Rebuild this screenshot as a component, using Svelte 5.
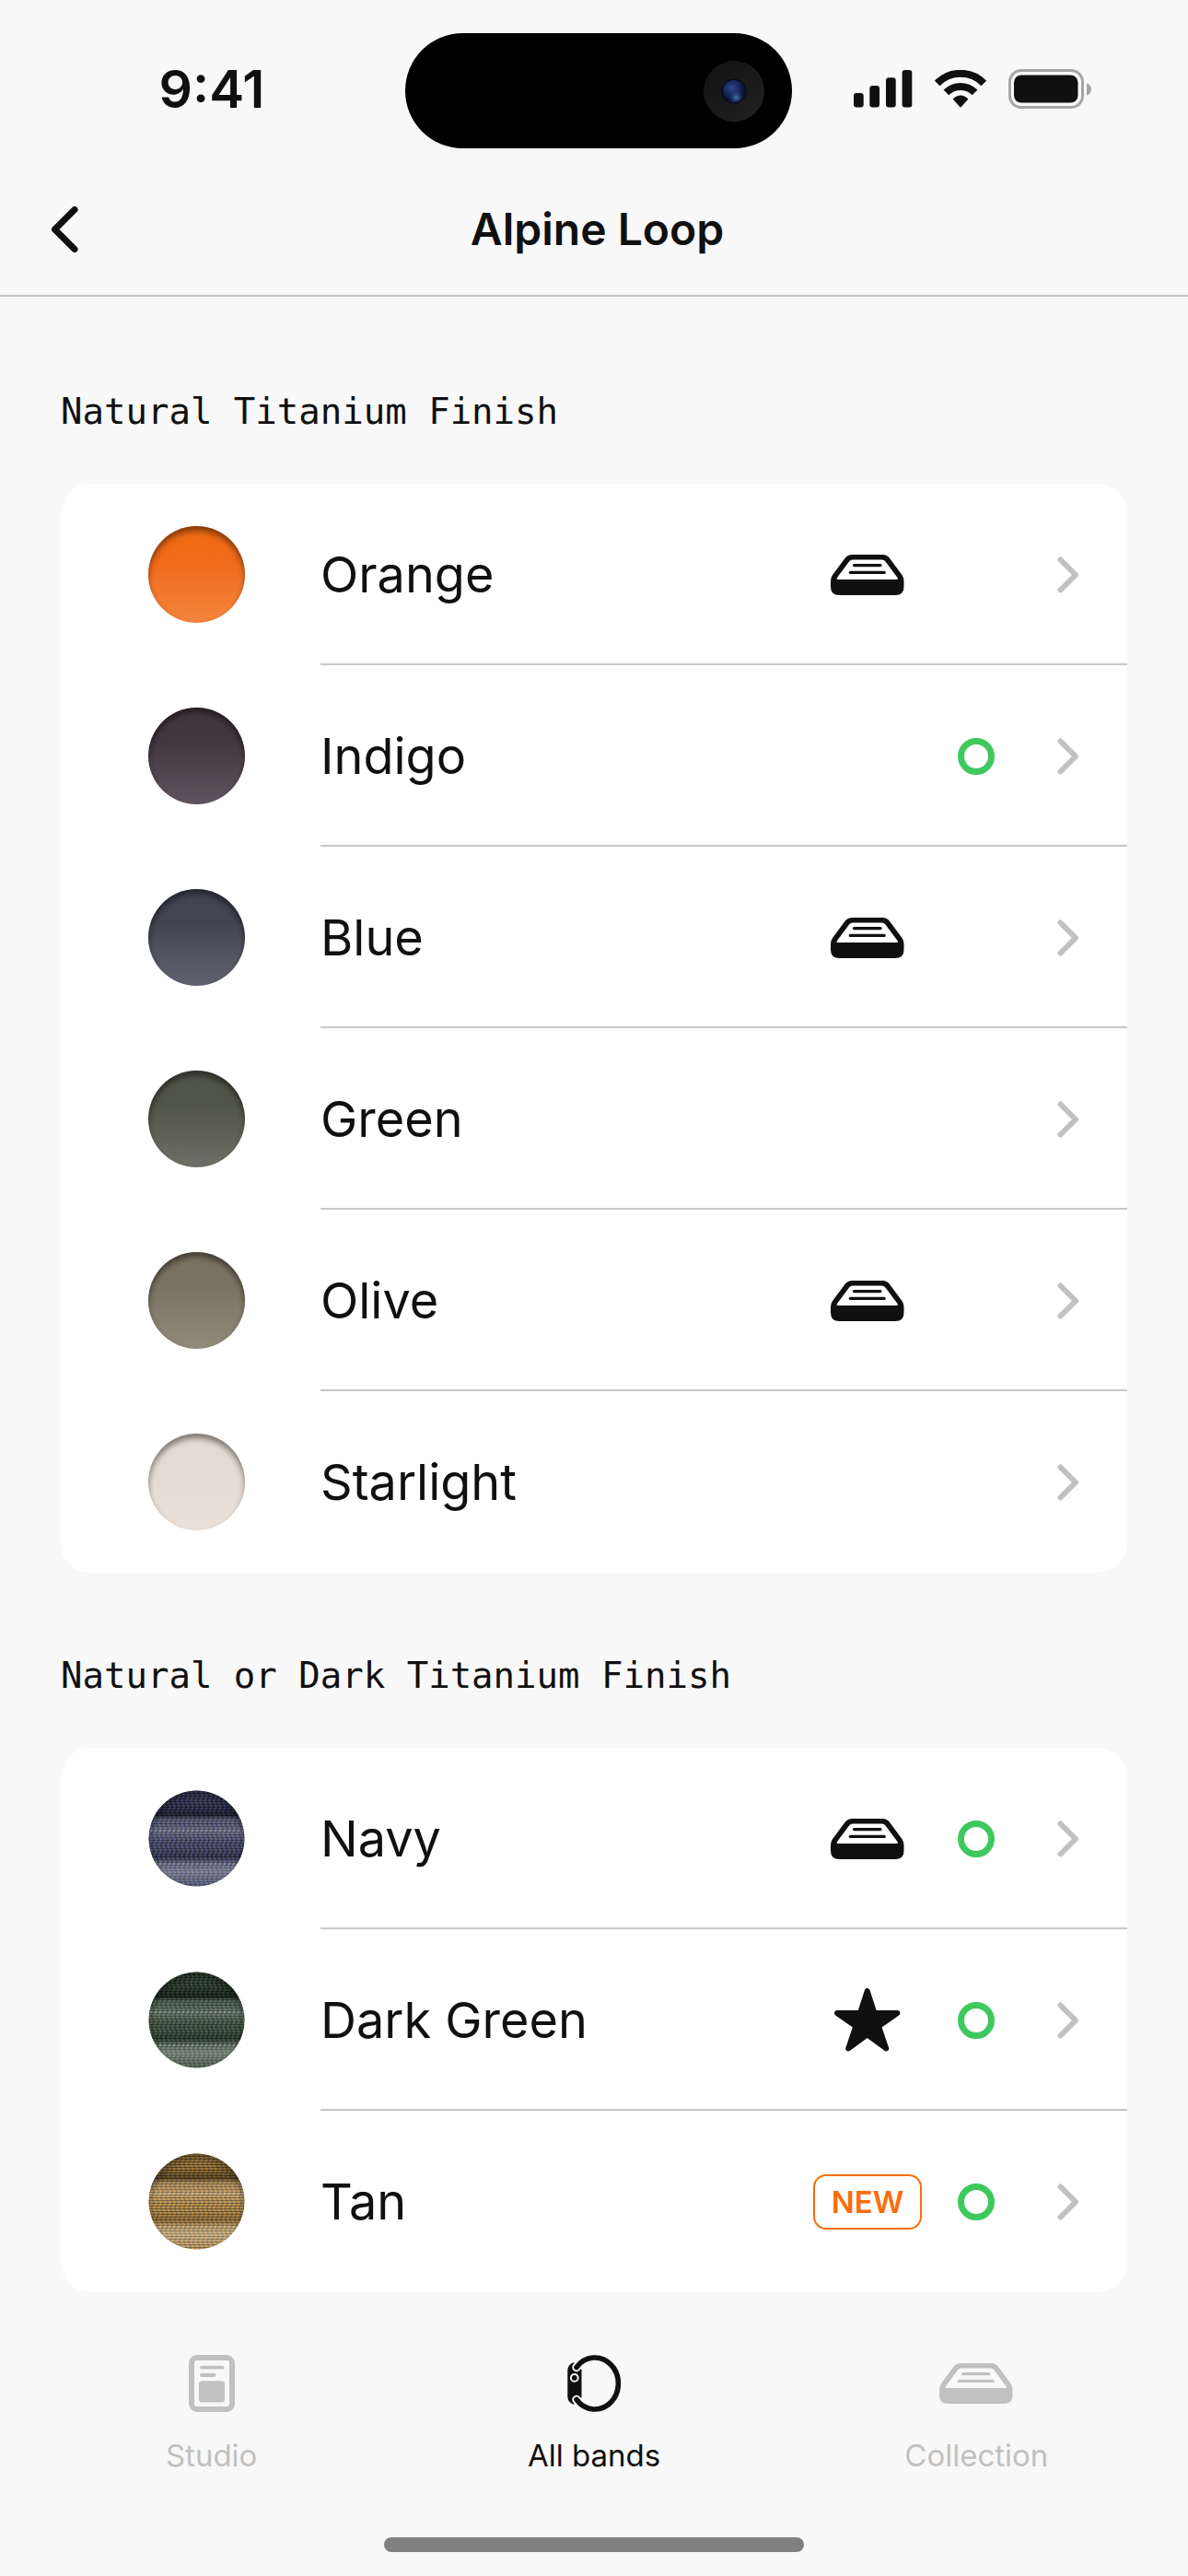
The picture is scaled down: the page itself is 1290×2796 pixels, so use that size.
<script>
  const groups = [
    {
      title: 'Natural Titanium Finish',
      bands: [
        { name: 'Orange', top: '#ef6a12', middle: '#f06a1a', bottom: '#f4843d', mark: 'tray' },
        { name: 'Indigo', top: '#42353e', middle: '#42363f', bottom: '#61535d', available: true },
        { name: 'Blue', top: '#404452', middle: '#424551', bottom: '#61626f', mark: 'tray' },
        { name: 'Green', top: '#515448', middle: '#515449', bottom: '#6e6f66' },
        { name: 'Olive', top: '#7a7261', middle: '#7a7262', bottom: '#918b7c', mark: 'tray' },
        { name: 'Starlight', top: '#e4dbd3', middle: '#e4dad2', bottom: '#eae0d8' },
      ],
    },
    {
      title: 'Natural or Dark Titanium Finish',
      bands: [
        { name: 'Navy', base: '#363740', yarn: '#4b518c', mark: 'tray', available: true },
        { name: 'Dark Green', base: '#2f3b36', yarn: '#41603f', mark: 'star', available: true },
        { name: 'Tan', base: '#8a7856', yarn: '#d0902f', mark: 'new', available: true },
      ],
    },
  ];

  const tabs = [
    { id: 'studio', label: 'Studio' },
    { id: 'bands', label: 'All bands' },
    { id: 'collection', label: 'Collection' },
  ];

  let activeTab = $state('bands');

  const slug = (name) => name.toLowerCase().replace(' ', '-');
</script>

{#snippet tray()}
  <svg width="80" height="44" viewBox="0 0 80 44" aria-hidden="true">
    <path
      fill="currentColor"
      fill-rule="evenodd"
      d="M23.5 0H56.5Q61 0 63.7 3.6L77.6 22.2Q79.5 25 79.5 28.5V35Q79.5 44 70 44H9.5Q0 44 0 35V28.5Q0 25 1.9 22.2L15.8 3.6Q18.5 0 23.5 0ZM24 5.5Q21.5 5.5 20 7.5L6.8 25.3Q6.2 27 7.5 27H72Q73.3 27 72.7 25.3L59.5 7.5Q58 5.5 55.5 5.5Z"
    />
    <path fill="none" stroke="currentColor" stroke-width="3.3" stroke-linecap="round" d="M25.5 11.6H54M21.3 19.4H58.2" />
  </svg>
{/snippet}

{#snippet star()}
  <svg width="72" height="69" viewBox="0 0 72 69" aria-hidden="true">
    <path
      fill="currentColor"
      stroke="currentColor"
      stroke-width="6"
      stroke-linejoin="round"
      d="M35.7 3.2L43.4 27H68.4L48 41.3L56.2 65.4L35.7 50.4L15.2 65.4L23.4 41.3L3 27H28Z"
    />
  </svg>
{/snippet}

{#snippet fabric(id, base, yarn)}
  <svg class="swatch" viewBox="0 0 105 105" aria-hidden="true">
    <defs>
      <pattern id="weave-{id}" width="5" height="12" patternUnits="userSpaceOnUse">
        <rect width="5" height="12" fill={base} />
        <path d="M1 0L3.8 6L1 12" fill="none" stroke={yarn} stroke-width="2.2" />
        <path d="M0 0.5H5M0 3.5H5M0 6.5H5M0 9.5H5" stroke="#000" stroke-opacity="0.4" stroke-width="1" />
      </pattern>
      <linearGradient id="light-{id}" x2="0" y2="1">
        <stop offset="0" stop-color="#000" stop-opacity="0.05" />
        <stop offset="0.14" stop-color="#000" stop-opacity="0.12" />
        <stop offset="0.26" stop-color="#000" stop-opacity="0.45" />
        <stop offset="0.34" stop-color="#fff" stop-opacity="0.12" />
        <stop offset="0.42" stop-color="#fff" stop-opacity="0.22" />
        <stop offset="0.54" stop-color="#fff" stop-opacity="0.06" />
        <stop offset="0.69" stop-color="#000" stop-opacity="0.14" />
        <stop offset="0.76" stop-color="#fff" stop-opacity="0.2" />
        <stop offset="0.84" stop-color="#fff" stop-opacity="0.32" />
        <stop offset="1" stop-color="#fff" stop-opacity="0.14" />
      </linearGradient>
      <radialGradient id="edge-{id}" cx="0.5" cy="0.55" r="0.55">
        <stop offset="0.8" stop-color="#000" stop-opacity="0" />
        <stop offset="1" stop-color="#000" stop-opacity="0.35" />
      </radialGradient>
    </defs>
    <circle cx="52.5" cy="52.5" r="52" fill="url(#weave-{id})" />
    <circle cx="52.5" cy="52.5" r="52" fill="url(#light-{id})" />
    <path d="M2 44H103M7 80H98" stroke="#fff" stroke-opacity="0.25" stroke-width="1.5" stroke-dasharray="2 3" />
    <circle cx="52.5" cy="52.5" r="52" fill="url(#edge-{id})" />
  </svg>
{/snippet}

<div class="screen">
  <div class="status-bar">
    <time class="clock">9:41</time>
    <div class="island">
      <svg width="66" height="66" viewBox="0 0 66 66" aria-hidden="true">
        <defs>
          <linearGradient id="camera" x1="0" y1="0" x2="1" y2="1">
            <stop offset="0" stop-color="#111" />
            <stop offset="1" stop-color="#222" />
          </linearGradient>
          <radialGradient id="lens-top" cx="0.4" cy="0.35" r="0.55">
            <stop offset="0" stop-color="#2c4690" />
            <stop offset="1" stop-color="#0b1336" />
          </radialGradient>
          <radialGradient id="lens-glow" cx="0.6" cy="0.78" r="0.35">
            <stop offset="0" stop-color="#3d7ba6" />
            <stop offset="1" stop-color="#1d3a6b" stop-opacity="0" />
          </radialGradient>
        </defs>
        <circle cx="33" cy="33" r="33" fill="url(#camera)" />
        <circle cx="33" cy="33" r="13.5" fill="#070b1c" />
        <circle cx="33" cy="33" r="12" fill="url(#lens-top)" />
        <circle cx="33" cy="33" r="12" fill="url(#lens-glow)" />
      </svg>
    </div>
    <div class="indicators">
      <svg width="64" height="41" viewBox="0 0 64 41" fill="currentColor" aria-hidden="true">
        <rect x="0" y="25" width="10.7" height="15.5" rx="3" />
        <rect x="17.3" y="17" width="10.7" height="23.5" rx="3" />
        <rect x="35" y="8.3" width="10.7" height="32.2" rx="3" />
        <rect x="52.6" y="0" width="10.7" height="40.5" rx="3" />
      </svg>
      <svg width="56" height="41" viewBox="0 0 56 41" aria-hidden="true">
        <path
          fill="none"
          stroke="currentColor"
          stroke-width="8"
          d="M2.7 14.4A35.5 35.5 0 0 1 53.3 14.4M12.4 24.4A22 22 0 0 1 43.6 24.4"
        />
        <path fill="currentColor" d="M19.6 31.5Q28 23.6 36.4 31.5L28.8 40Q28 40.8 27.2 40Z" />
      </svg>
      <svg width="91" height="43" viewBox="0 0 91 43" aria-hidden="true">
        <rect x="1.5" y="1.5" width="79" height="40" rx="12.5" fill="none" stroke="#a6a6a6" stroke-width="3" />
        <rect x="6" y="6.5" width="69.5" height="30" rx="8" fill="currentColor" />
        <path fill="#a6a6a6" d="M85 15.3Q90 17.5 90 22T85 28.7Z" />
      </svg>
    </div>
  </div>

  <header>
    <button class="back" aria-label="Back">
      <svg width="32" height="50" viewBox="0 0 32 50" aria-hidden="true">
        <path d="M26 3.5L4.5 25L26 46.5" fill="none" stroke="currentColor" stroke-width="7" stroke-linecap="round" stroke-linejoin="round" />
      </svg>
    </button>
    <h1>Alpine Loop</h1>
  </header>

  <main>
    {#each groups as group}
      <section>
        <h2>{group.title}</h2>
        <ul>
          {#each group.bands as band}
            <li>
              <a href="#{slug(band.name)}">
                {#if band.yarn}
                  {@render fabric(slug(band.name), band.base, band.yarn)}
                {:else}
                  <span
                    class="swatch solid"
                    style="--top: {band.top}; --middle: {band.middle}; --bottom: {band.bottom}"
                  ></span>
                {/if}
                <span class="details">
                  <span class="name">{band.name}</span>
                  <span class="mark">
                    {#if band.mark === 'tray'}
                      {@render tray()}
                    {:else if band.mark === 'star'}
                      {@render star()}
                    {:else if band.mark === 'new'}
                      <span class="badge">NEW</span>
                    {/if}
                  </span>
                  <span class="ring" class:available={band.available}></span>
                  <svg class="chevron" width="24" height="40" viewBox="0 0 24 40" aria-hidden="true">
                    <path d="M3.5 3.5L20 20L3.5 36.5" fill="none" stroke="currentColor" stroke-width="6" stroke-linecap="round" stroke-linejoin="round" />
                  </svg>
                </span>
              </a>
            </li>
          {/each}
        </ul>
      </section>
    {/each}
  </main>

  <nav>
    {#each tabs as tab}
      <button class="tab" class:active={activeTab === tab.id} onclick={() => (activeTab = tab.id)}>
        <span class="tab-icon">
          {#if tab.id === 'studio'}
            <svg width="50" height="62" viewBox="0 0 50 62" aria-hidden="true">
              <rect x="3" y="3" width="44" height="56" rx="6" fill="none" stroke="currentColor" stroke-width="6" />
              <path d="M14 13.7H36.5M14 22H27.5" stroke="currentColor" stroke-width="3.8" stroke-linecap="round" />
              <rect x="11" y="28.3" width="28" height="23.3" rx="3.5" fill="currentColor" />
            </svg>
          {:else if tab.id === 'bands'}
            <svg width="58" height="62" viewBox="0 0 58 62" aria-hidden="true">
              <path fill="currentColor" d="M6 8.5H9L15.5 16V46L9 53.5H6Q0.3 51 0.3 45V17Q0.3 11 6 8.5Z" />
              <circle cx="7.8" cy="24.9" r="3.9" fill="none" stroke="#f8f8f8" stroke-width="2" />
              <path d="M10 13.5A25.5 28 0 1 1 10 48.5" fill="none" stroke="#f8f8f8" stroke-width="9.5" stroke-linecap="round" />
              <path d="M10 13.5A25.5 28 0 1 1 10 48.5" fill="none" stroke="currentColor" stroke-width="5.6" stroke-linecap="round" />
            </svg>
          {:else}
            {@render tray()}
          {/if}
        </span>
        {tab.label}
      </button>
    {/each}
  </nav>
  <div class="home-indicator"></div>
</div>

<style>
  :global(body) {
    margin: 0;
    background: #f8f8f8;
  }

  .screen {
    display: flex;
    flex-direction: column;
    min-height: 100vh;
    box-sizing: border-box;
    color: #101010;
    background: #f8f8f8;
    font-family: Inter, 'Liberation Sans', sans-serif;
  }

  svg {
    display: block;
    flex: none;
  }

  button {
    padding: 0;
    border: 0;
    background: none;
    color: inherit;
    font: inherit;
    cursor: pointer;
  }

  .status-bar {
    display: grid;
    grid-template-columns: 1fr 420px 1fr;
    align-items: center;
    padding: 36px 0 0 10px;
  }

  .clock {
    justify-self: center;
    padding: 0 0 4px 10px;
    font-size: 57px;
    font-weight: 600;
    line-height: 64px;
  }

  .island {
    display: flex;
    align-items: center;
    justify-content: flex-end;
    height: 125px;
    box-sizing: border-box;
    padding-right: 30px;
    border-radius: 63px;
    background: #000;
  }

  .indicators {
    display: flex;
    align-items: center;
    gap: 24px;
    padding: 0 0 4px 67px;
  }

  header {
    display: grid;
    grid-template-columns: 1fr auto 1fr;
    align-items: center;
    padding: 58px 48px 41px 55px;
    border-bottom: 2px solid #c4c4c4;
  }

  .back {
    justify-self: start;
  }

  h1 {
    margin: 0;
    font-size: 48px;
    font-weight: 600;
    line-height: 60px;
  }

  main {
    padding: 101px 66px 0;
  }

  section + section {
    margin-top: 88px;
  }

  h2 {
    margin: 0 0 54px;
    font-family: 'DejaVu Sans Mono', monospace;
    font-size: 39px;
    font-weight: 400;
    line-height: 48px;
  }

  ul {
    margin: 0;
    padding: 0;
    border-radius: 32px;
    background: #fff;
    list-style: none;
    overflow: hidden;
  }

  a {
    display: grid;
    grid-template-columns: 105px 1fr;
    align-items: center;
    gap: 82px;
    padding-left: 95px;
    color: inherit;
    text-decoration: none;
  }

  .swatch {
    width: 105px;
    height: 105px;
    border-radius: 50%;
  }

  .solid {
    background: linear-gradient(var(--top), var(--middle) 35%, var(--bottom));
    box-shadow: inset 0 5px 6px rgba(0, 0, 0, 0.45);
  }

  .details {
    display: flex;
    align-items: center;
    height: 197px;
    box-sizing: border-box;
    padding: 2px 52px 0 0;
    border-bottom: 2px solid #c8c8c8;
  }

  li:last-child .details {
    border-bottom-color: transparent;
  }

  .name {
    flex: 1;
    font-size: 54px;
    line-height: 64px;
  }

  .mark {
    display: flex;
    justify-content: center;
    width: 118px;
    margin-right: 39px;
  }

  .badge {
    width: 100%;
    box-sizing: border-box;
    border: 2px solid #f96e0b;
    border-radius: 14px;
    color: #f96e0b;
    font-family: Inter, sans-serif;
    font-size: 33px;
    font-weight: 600;
    line-height: 56px;
    text-align: center;
  }

  .ring {
    width: 40px;
    height: 40px;
    box-sizing: border-box;
    margin-right: 68px;
  }

  .available {
    border: 7px solid #3ec95c;
    border-radius: 50%;
  }

  .chevron {
    color: #c1c1c1;
  }

  nav {
    display: grid;
    grid-template-columns: repeat(3, 1fr);
    padding: 68px 22px 0;
  }

  .tab {
    display: flex;
    flex-direction: column;
    align-items: center;
    gap: 27px;
    color: #c1c1c1;
    font-size: 33px;
    line-height: 40px;
  }

  .tab.active {
    color: #101010;
  }

  .tab-icon {
    display: flex;
    align-items: center;
    height: 62px;
  }

  .home-indicator {
    width: 456px;
    height: 16px;
    margin: auto auto 26px;
    border-radius: 8px;
    background: #808080;
  }
</style>
